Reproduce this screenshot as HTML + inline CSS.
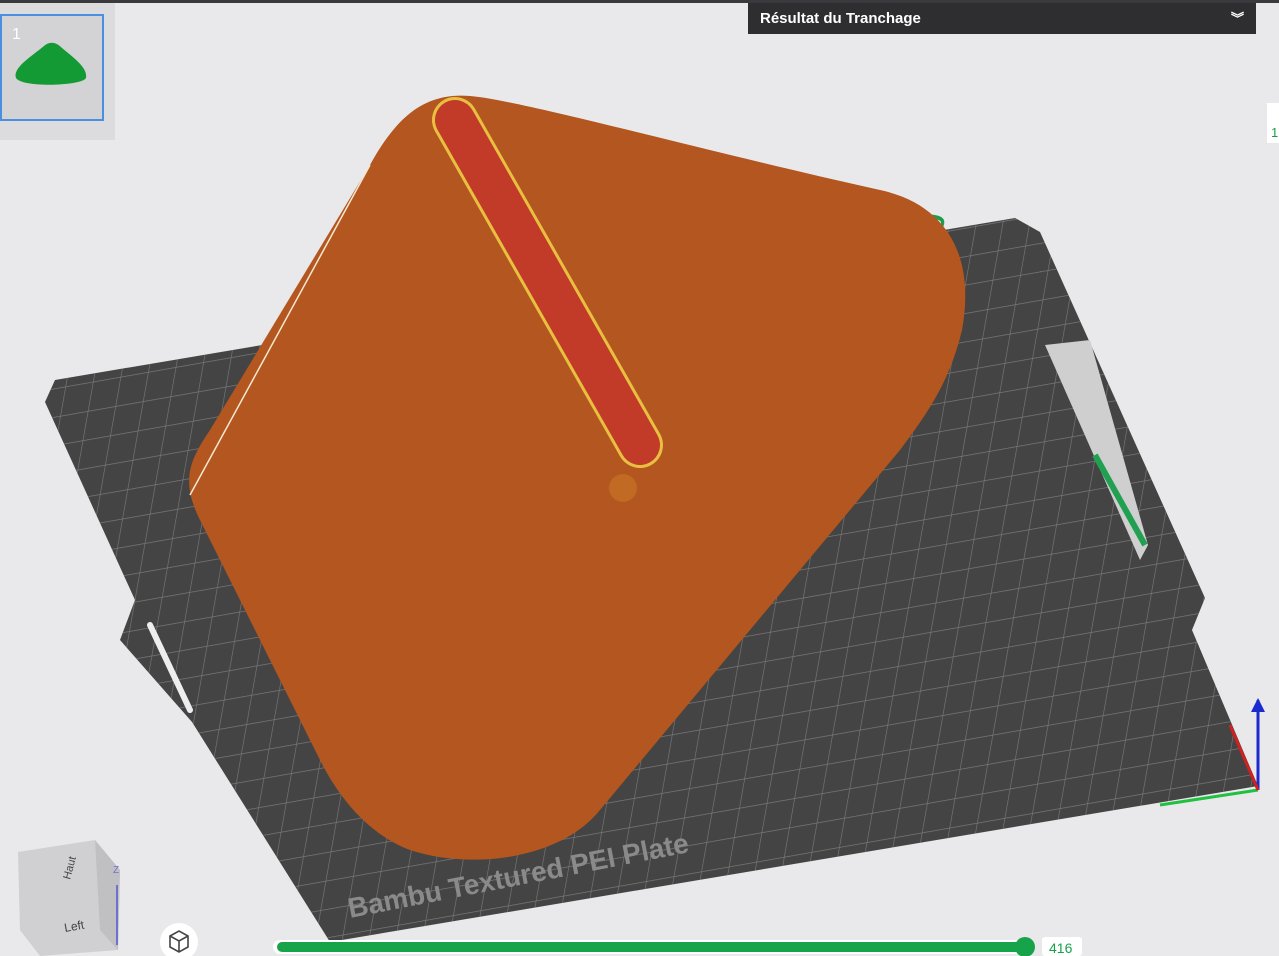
<!DOCTYPE html>
<html><head><meta charset="utf-8"><style>
body{margin:0;width:1279px;height:956px;overflow:hidden;background:#e9e9eb;font-family:"Liberation Sans",sans-serif;position:relative}
.top{position:absolute;left:0;top:0;width:1279px;height:3px;background:#3a3a3e}
.hdr{position:absolute;left:748px;top:3px;width:508px;height:31px;background:#2e2e31;color:#fff;font-size:15px;font-weight:bold;line-height:31px;box-sizing:border-box;padding-left:12px}
.hdr span{position:absolute;right:12px;top:0;font-size:13px}
.thumbwrap{position:absolute;left:0;top:3px;width:115px;height:137px;background:#dcdcde}
.thumb{position:absolute;left:0;top:11px;width:104px;height:107px;border:2px solid #4a8fe0;background:#d3d3d5;box-sizing:border-box}
.rt{position:absolute;left:1267px;top:103px;width:12px;height:40px;background:#fff;color:#1a9e4a;font-size:13px;line-height:60px;padding-left:4px;box-sizing:border-box}
</style></head><body>
<div class="top"></div>
<svg width="1279" height="956" style="position:absolute;left:0;top:0">
<defs>
<pattern id="g" width="28" height="28" patternUnits="userSpaceOnUse" patternTransform="rotate(-10) skewX(-20)">
<path d="M0 0H28M0 0V28" stroke="#7a7a7a" stroke-width="1.3" fill="none"/>
</pattern>
</defs>
<path d="M55 380 L1015 218 L1040 232 L1205 598 L1192 630 L1258 786 L330 942 L192 722 L120 640 L135 600 L45 402 Z" fill="#444"/>
<path d="M55 380 L1015 218 L1040 232 L1205 598 L1192 630 L1258 786 L330 942 L192 722 L120 640 L135 600 L45 402 Z" fill="url(#g)"/>
<path d="M150 625 L190 710" stroke="#eee" stroke-width="6" stroke-linecap="round"/>
<text x="350" y="918" fill="#8a8a8a" font-size="28" font-weight="bold" transform="rotate(-11 350 918)">Bambu Textured PEI Plate</text>
<path d="M1045 345 L1090 340 L1148 545 L1140 560 Z" fill="#cfcfcf"/>
<path d="M1095 455 L1145 545" stroke="#20a050" stroke-width="6"/>
<text x="925" y="212" fill="#1a9e4a" font-size="30" font-weight="bold" transform="rotate(100 925 212)">01</text>
<path d="M470 96 C520 100 700 150 880 190 C950 205 975 260 962 330 C950 380 930 410 900 450 L600 810 C560 860 470 870 410 850 C370 835 340 800 320 760 L200 520 C180 480 190 460 210 430 L370 165 C400 110 430 93 470 96 Z" fill="#b4561f"/>
<path d="M190 495 L370 165" stroke="#f5e8d0" stroke-width="1.5" fill="none"/>
<path d="M455 120 L640 445" stroke="#e8c040" stroke-width="46" stroke-linecap="round"/>
<path d="M455 120 L640 445" stroke="#c23a28" stroke-width="40" stroke-linecap="round"/>
<circle cx="623" cy="488" r="14" fill="#c06a24"/>
<path d="M1258 700 V790" stroke="#1a2ad0" stroke-width="3"/>
<path d="M1251 712 L1258 698 L1265 712 Z" fill="#1a2ad0"/>
<path d="M1258 790 L1160 805" stroke="#20c040" stroke-width="3"/>
<path d="M1258 790 L1230 725" stroke="#d02020" stroke-width="3"/>
<path d="M18 852 L95 840 L120 870 L118 950 L40 956 L20 930 Z" fill="#d0d0d2"/>
<path d="M95 840 L120 870 L118 950 L100 930 Z" fill="#c0c0c2"/>
<text x="65" y="932" font-size="12" fill="#444" transform="rotate(-10 65 932)">Left</text>
<text x="70" y="880" font-size="11" fill="#444" transform="rotate(-75 70 880)">Haut</text>
<path d="M117 885 V945" stroke="#7070d0" stroke-width="2"/>
<text x="113" y="873" font-size="10" fill="#7070d0">Z</text>
<circle cx="179" cy="942" r="19" fill="#fff"/>
<path d="M170 936 L179 931 L188 936 L188 947 L179 952 L170 947 Z M170 936 L179 941 L188 936 M179 941 V952" stroke="#444" stroke-width="1.6" fill="none"/>
<rect x="273" y="940" width="757" height="14" rx="7" fill="#fff"/>
<rect x="277" y="942" width="750" height="10" rx="5" fill="#16a34a"/>
<circle cx="1025" cy="947" r="10" fill="#16a34a"/>
<rect x="1042" y="937" width="40" height="19" rx="3" fill="#fff"/>
<text x="1049" y="953" font-size="14" fill="#16a34a">416</text>
</svg>
<div class="hdr">Résultat du Tranchage<span>︾</span></div>
<div class="thumbwrap"><div class="thumb">
<span style="position:absolute;left:10px;top:10px;color:#fff;font-size:16px">1</span>
<svg width="100" height="100" style="position:absolute;left:0;top:0"><path d="M14 62 C10 52 30 40 42 30 C48 25 54 26 60 32 C72 42 86 52 84 62 C80 70 20 72 14 62 Z" fill="#139a35"/></svg>
</div></div>
<div class="rt">1</div>
</body></html>
